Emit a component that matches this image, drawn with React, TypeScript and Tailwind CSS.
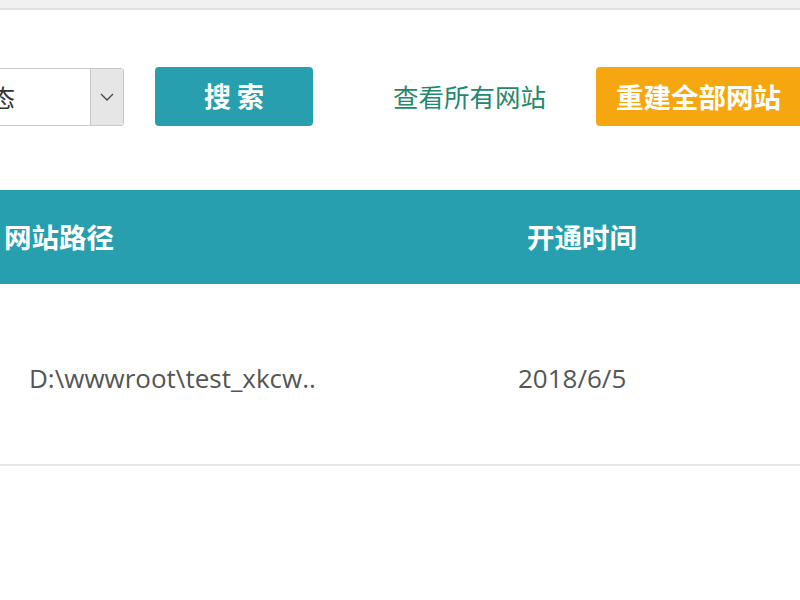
const cjk = "font-['Microsoft_YaHei','Noto_Sans_CJK_SC',sans-serif]";
const latin = "font-['Open_Sans','Noto_Sans_CJK_SC',sans-serif]";

function StatusSelect() {
  return (
    <div className="flex shrink-0 h-[58px] w-[166px] ml-[-42px] rounded-[3px] border border-[#c8c8c8] bg-white overflow-hidden">
      <div className={`flex-1 flex items-center pl-[8px] text-[24px] text-[#333] whitespace-nowrap ${cjk}`}>状态</div>
      <div className="w-[33px] flex items-center justify-center bg-[#e6e6e6] border-l border-[#c8c8c8]">
        <svg width="14" height="8" viewBox="0 0 14 8" fill="none">
          <path d="M1 1 7 7 13 1" stroke="#444" strokeWidth="1.3" />
        </svg>
      </div>
    </div>
  );
}

export default function App() {
  return (
    <div className="w-[800px] h-[600px] bg-white overflow-hidden">
      <div className="h-[10px] bg-[#f1f1f1] border-b-2 border-[#e1e1e1]" />

      <div className="flex items-center mt-[57px] h-[59px]">
        <StatusSelect />
        <button className={`shrink-0 ml-[31px] w-[158px] h-[59px] rounded-[4px] bg-[#279fae] text-white text-[27px] font-bold whitespace-pre ${cjk}`}>
          搜 索
        </button>
        <a href="#" className={`shrink-0 ml-[80px] text-[25.5px] text-[#23896c] whitespace-nowrap ${cjk}`}>查看所有网站</a>
        <button className={`shrink-0 ml-[50px] w-[230px] h-[59px] rounded-l-[4px] bg-[#f6a70f] text-white text-[27.5px] font-bold text-left pl-[20px] whitespace-nowrap ${cjk}`}>
          重建全部网站
        </button>
      </div>

      <div className="mt-[64px]">
        <div className="grid grid-cols-[518px_1fr] h-[94px] bg-[#279fae] items-center">
          <div className={`pl-[4px] text-[27.5px] font-bold text-white ${cjk}`}>网站路径</div>
          <div className={`pl-[9px] text-[27.5px] font-bold text-white ${cjk}`}>开通时间</div>
        </div>
        <div className="grid grid-cols-[518px_1fr] h-[182px] items-center border-b-2 border-[#e8e8e8] pt-[8px]">
          <div className={`pl-[29px] text-[26px] text-[#555] whitespace-nowrap ${latin}`}>D:\wwwroot\test_xkcw..</div>
          <div className={`text-[26px] text-[#555] ${latin}`}>2018/6/5</div>
        </div>
      </div>
    </div>
  );
}
